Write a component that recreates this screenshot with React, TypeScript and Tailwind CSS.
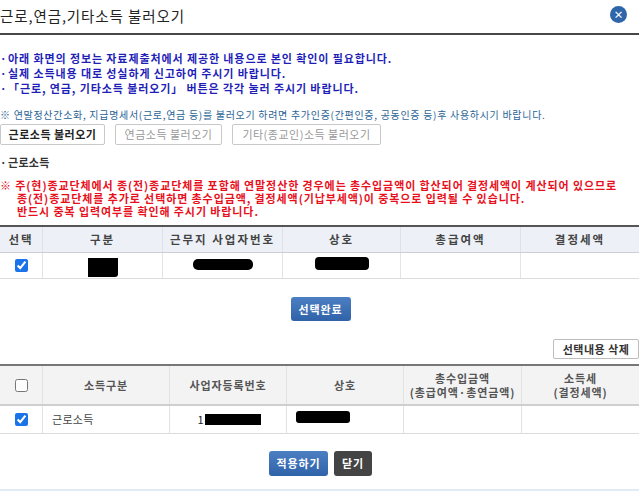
import React from 'react';

const FONT = { fontFamily: '"Noto Sans CJK KR", "Noto Sans", sans-serif' };

function Check({ checked }: { checked: boolean }) {
  return (
    <input
      type="checkbox"
      defaultChecked={checked}
      className="w-[13px] h-[13px] m-0 accent-[#1a73e8]"
    />
  );
}

function Blob({ className }: { className: string }) {
  return <div className={`bg-black ${className}`} />;
}

export default function App() {
  const cell1 = 'flex items-center justify-center border-r border-[#dde2ea] last:border-r-0';
  const cell2 = 'flex items-center justify-center border-r border-[#e2e2e2] last:border-r-0';

  return (
    <div className="w-[639px] h-[491px] bg-white overflow-hidden flex flex-col tracking-[0.9px]" style={FONT}>
      {/* header */}
      <div className="h-[35px] flex items-center justify-between border-b-2 border-[#474747] pb-[2px]">
        <h1 className="text-[14.5px] text-[#222] tracking-[0.9px]">근로,연금,기타소득 불러오기</h1>
        <button className="w-[17px] h-[17px] rounded-full bg-[#2f65a9] text-white text-[10px] font-bold leading-none tracking-normal flex items-center justify-center mr-[12px] -mt-[2px]">
          ×
        </button>
      </div>

      {/* notices */}
      <div className="mt-[16px] text-[11px] leading-[15px] font-bold text-[#1f1fb8]">
        <p><span className="inline-block w-[8px]">·</span>아래 화면의 정보는 자료제출처에서 제공한 내용으로 본인 확인이 필요합니다.</p>
        <p><span className="inline-block w-[8px]">·</span>실제 소득내용 대로 성실하게 신고하여 주시기 바랍니다.</p>
        <p><span className="inline-block w-[8px]">·</span>「근로, 연금, 기타소득 불러오기」 버튼은 각각 눌러 주시기 바랍니다.</p>
      </div>
      <p className="mt-[11px] text-[10px] leading-[15px] text-[#2b6496] tracking-[0.7px] whitespace-nowrap">
        ※ 연말정산간소화, 지급명세서(근로,연금 등)를 불러오기 하려면 추가인증(간편인증, 공동인증 등)후 사용하시기 바랍니다.
      </p>

      <div className="mt-[2px] flex gap-[10px] text-[11px] tracking-[0.5px]">
        <button className="h-[21px] w-[105px] border border-[#c9c9c9] rounded-[2px] bg-white font-bold text-[#222]">근로소득 불러오기</button>
        <button className="h-[21px] w-[107px] border border-[#c9c9c9] rounded-[2px] bg-white text-[#999]">연금소득 불러오기</button>
        <button className="h-[21px] w-[149px] border border-[#c9c9c9] rounded-[2px] bg-white text-[#999]">기타(종교인)소득 불러오기</button>
      </div>

      <p className="mt-[10px] text-[11px] leading-[15px] font-bold text-[#333] tracking-[0.3px]">
        <span className="inline-block w-[8px]">·</span>근로소득
      </p>

      <div className="mt-[9px] text-[11px] leading-[13px] font-bold text-[#e8101c] whitespace-nowrap">
        <p>※ 주(현)종교단체에서 종(전)종교단체를 포함해 연말정산한 경우에는 총수입금액이 합산되어 결정세액이 계산되어 있으므로</p>
        <p className="pl-[17px]">종(전)종교단체를 추가로 선택하면 총수입금액, 결정세액(기납부세액)이 중복으로 입력될 수 있습니다.</p>
        <p className="pl-[17px]">반드시 중복 입력여부를 확인해 주시기 바랍니다.</p>
      </div>

      {/* table 1 */}
      <div className="mt-[7px] border-t-2 border-[#555]">
        <div className="grid grid-cols-[43px_120px_120px_118px_120px_118px] h-[26px] bg-[#edf1f7] border-b border-[#c9ced6] text-[11.5px] font-bold text-[#444] tracking-[2px]">
          <div className={cell1}>선택</div>
          <div className={cell1}>구분</div>
          <div className={cell1}>근무지 사업자번호</div>
          <div className={cell1}>상호</div>
          <div className={cell1}>총급여액</div>
          <div className={cell1}>결정세액</div>
        </div>
        <div className="grid grid-cols-[43px_120px_120px_118px_120px_118px] h-[26px] border-b border-[#dcdcdc]">
          <div className={`${cell1} border-[#e4e4e4]`}><Check checked /></div>
          <div className={`${cell1} border-[#e4e4e4]`}><Blob className="w-[30px] h-[19px] rounded-br-[3px] mt-[4px]" /></div>
          <div className={`${cell1} border-[#e4e4e4]`}><Blob className="w-[60px] h-[11px] rounded-[5px] -mt-[2px]" /></div>
          <div className={`${cell1} border-[#e4e4e4]`}><Blob className="w-[54px] h-[13px] rounded-[4px] -mt-[5px]" /></div>
          <div className={`${cell1} border-[#e4e4e4]`}></div>
          <div className={`${cell1} border-[#e4e4e4]`}></div>
        </div>
      </div>

      <div className="mt-[18px] flex justify-center">
        <button className="h-[24px] w-[60px] rounded-[3px] bg-gradient-to-b from-[#4c7fc2] to-[#2f62a8] text-white text-[11px] font-bold ml-[2px]">선택완료</button>
      </div>

      <div className="mt-[18px] flex justify-end">
        <button className="h-[20px] w-[86px] border border-[#bdbdbd] rounded-[2px] bg-white text-[11px] font-bold text-[#333] tracking-[0.5px]">선택내용 삭제</button>
      </div>

      {/* table 2 */}
      <div className="mt-[5px] border-t-2 border-[#777]">
        <div className="grid grid-cols-[43px_127px_117px_117px_118px_117px] h-[40px] bg-[#f3f3f3] border-b-2 border-[#cfcfcf] text-[11px] leading-[14px] font-bold text-[#555]">
          <div className={cell2}><Check checked={false} /></div>
          <div className={cell2}>소득구분</div>
          <div className={cell2}>사업자등록번호</div>
          <div className={cell2}>상호</div>
          <div className={`${cell2} flex-col`}><span>총수입금액</span><span>(총급여액·총연금액)</span></div>
          <div className={`${cell2} flex-col`}><span>소득세</span><span>(결정세액)</span></div>
        </div>
        <div className="grid grid-cols-[43px_127px_117px_117px_118px_117px] h-[28px] border-b border-[#dcdcdc] text-[11px] text-[#444]">
          <div className={cell2}><Check checked /></div>
          <div className={`${cell2} justify-start pl-[9px] tracking-[0.3px]`}>근로소득</div>
          <div className={cell2}>
            <span className="text-[#222] ml-[2px]">1</span>
            <Blob className="w-[56px] h-[11px]" />
          </div>
          <div className={`${cell2} justify-start pl-[9px]`}>
            <Blob className="w-[54px] h-[12px] rounded-[3px] -mt-[6px]" />
          </div>
          <div className={cell2}></div>
          <div className={cell2}></div>
        </div>
      </div>

      <div className="mt-[17px] flex justify-center gap-[6px]">
        <button className="h-[25px] w-[59px] rounded-[3px] bg-gradient-to-b from-[#4c7fc2] to-[#2f62a8] text-white text-[11px] font-bold ml-[2px]">적용하기</button>
        <button className="h-[25px] w-[38px] rounded-[3px] bg-[#444] text-white text-[11px] font-bold">닫기</button>
      </div>

      <div className="mt-auto h-[2px] bg-[#e1ebf5]" />
    </div>
  );
}
